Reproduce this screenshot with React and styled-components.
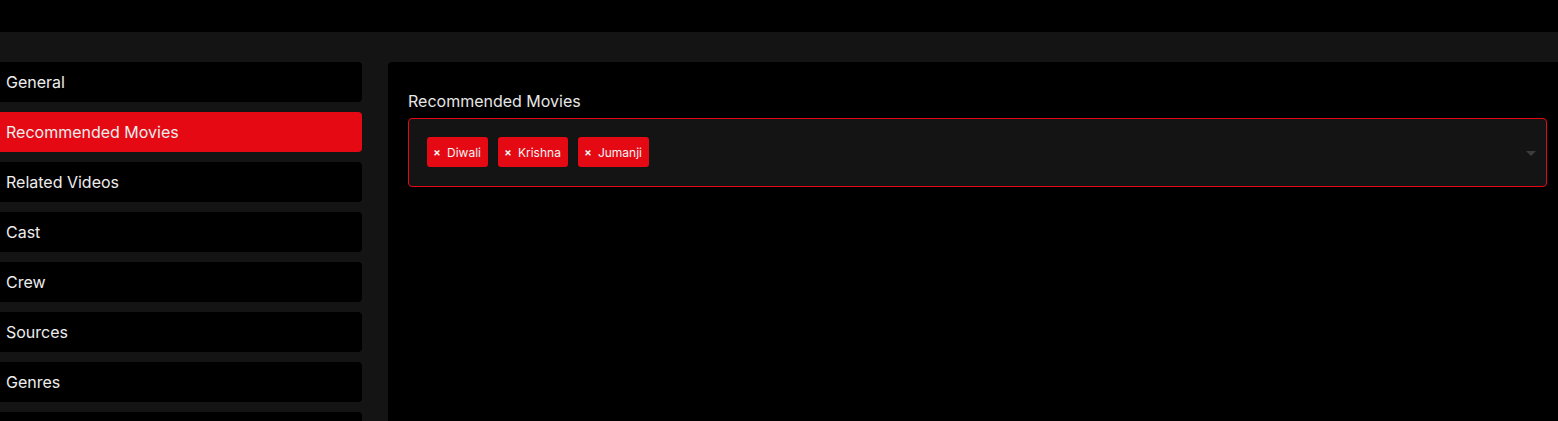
import React from "react";
import styled, { createGlobalStyle } from "styled-components";

const Global = createGlobalStyle`
  html, body { margin: 0; padding: 0; background: #141414; }
  body { font-family: Inter, "Noto Sans", sans-serif; color: #e8e8e8; overflow: hidden; }
`;

const Page = styled.div`
  width: 1558px;
  height: 421px;
  background: #141414;
  overflow: hidden;
`;

const TopBar = styled.div`
  height: 32px;
  background: #000;
`;

const Body = styled.div`
  display: flex;
  gap: 26px;
  padding-top: 30px;
`;

const Sidebar = styled.nav`
  width: 362px;
  display: flex;
  flex-direction: column;
  gap: 10px;
  flex-shrink: 0;
`;

const NavItem = styled.div`
  height: 40px;
  display: flex;
  align-items: center;
  padding-left: 6px;
  font-size: 16px;
  color: #ededed;
  background: ${(p) => (p.$active ? "#e50914" : "#000")};
  border-radius: 0 4px 4px 0;
`;

const Panel = styled.main`
  flex: 1;
  background: #000;
  border-radius: 4px 0 0 0;
  padding: 29px 11px 0 20px;
  height: 400px;
`;

const Label = styled.div`
  font-size: 16px;
  color: #e6e6e6;
  margin-bottom: 7px;
  line-height: 20px;
`;

const SelectBox = styled.div`
  position: relative;
  border: 1px solid #e50914;
  border-radius: 4px;
  background: #141414;
  box-sizing: border-box;
  height: 69px;
  padding: 18px;
  display: flex;
  gap: 10px;
  align-items: flex-start;
`;

const Tag = styled.div`
  height: 30px;
  display: flex;
  align-items: center;
  gap: 7px;
  padding: 0 7px 0 6px;
  background: #e50914;
  border-radius: 3px;
  font-size: 12px;
  color: #f4f4f4;
`;

const Remove = styled.span`
  font-size: 11px;
  font-weight: 700;
  width: 6px;
  display: inline-flex;
  justify-content: center;
  margin-left: 1px;
`;

const Arrow = styled.div`
  position: absolute;
  right: 10px;
  top: 32px;
  width: 0;
  height: 0;
  border-left: 5px solid transparent;
  border-right: 5px solid transparent;
  border-top: 5px solid #3c3c3c;
`;

const items = ["General", "Recommended Movies", "Related Videos", "Cast", "Crew", "Sources", "Genres", ""];
const tags = ["Diwali", "Krishna", "Jumanji"];

export default function App() {
  return (
    <Page>
      <Global />
      <TopBar />
      <Body>
        <Sidebar>
          {items.map((it, i) => (
            <NavItem key={i} $active={i === 1}>{it}</NavItem>
          ))}
        </Sidebar>
        <Panel>
          <Label>Recommended Movies</Label>
          <SelectBox>
            {tags.map((t) => (
              <Tag key={t}>
                <Remove>×</Remove>
                {t}
              </Tag>
            ))}
            <Arrow />
          </SelectBox>
        </Panel>
      </Body>
    </Page>
  );
}
